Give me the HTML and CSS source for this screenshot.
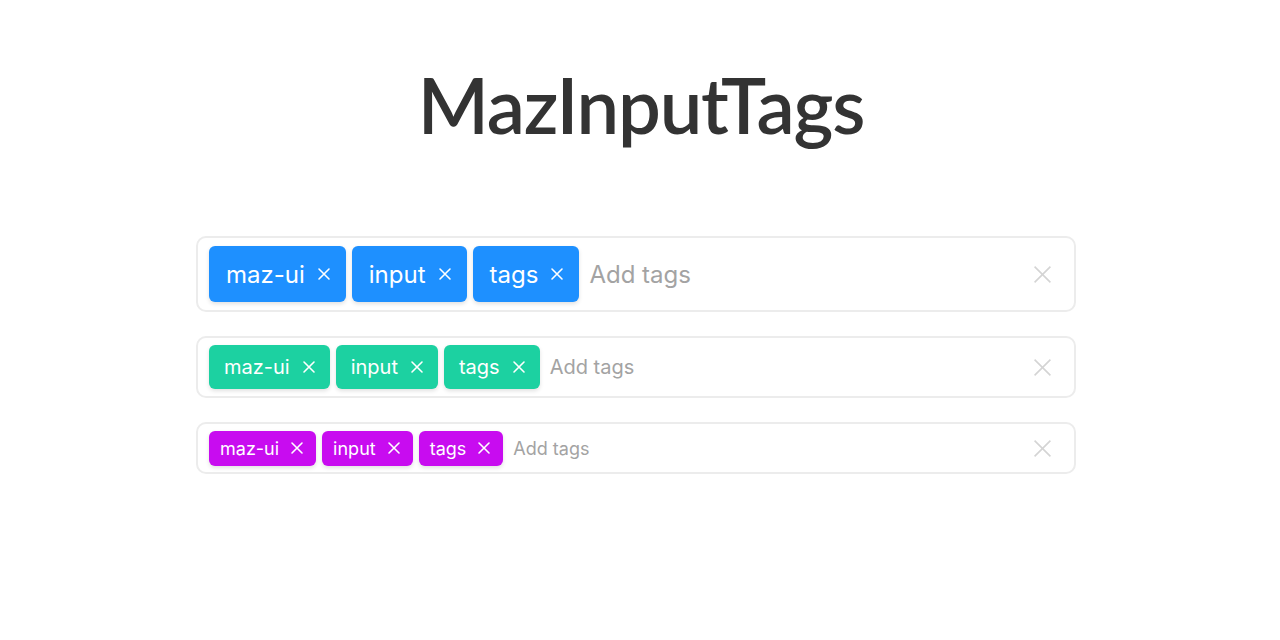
FILE: index.html
```html
<!DOCTYPE html>
<html lang="en">
<head>
<meta charset="utf-8">
<title>MazInputTags</title>
<link rel="stylesheet" href="styles.css">
</head>
<body>
  <h1 class="title">MazInputTags</h1>
  <main class="stack">
    <div class="tags-input size-lg">
      <span class="tag tag-blue">maz-ui<svg class="tag-x" viewBox="0 0 14 14"><path d="M2 2 L12 12 M12 2 L2 12"/></svg></span>
      <span class="tag tag-blue">input<svg class="tag-x" viewBox="0 0 14 14"><path d="M2 2 L12 12 M12 2 L2 12"/></svg></span>
      <span class="tag tag-blue">tags<svg class="tag-x" viewBox="0 0 14 14"><path d="M2 2 L12 12 M12 2 L2 12"/></svg></span>
      <span class="placeholder">Add tags</span>
      <svg class="clear" viewBox="0 0 18 18"><path d="M1.5 1.5 L16.5 16.5 M16.5 1.5 L1.5 16.5"/></svg>
    </div>
    <div class="tags-input size-md">
      <span class="tag tag-green">maz-ui<svg class="tag-x" viewBox="0 0 14 14"><path d="M2 2 L12 12 M12 2 L2 12"/></svg></span>
      <span class="tag tag-green">input<svg class="tag-x" viewBox="0 0 14 14"><path d="M2 2 L12 12 M12 2 L2 12"/></svg></span>
      <span class="tag tag-green">tags<svg class="tag-x" viewBox="0 0 14 14"><path d="M2 2 L12 12 M12 2 L2 12"/></svg></span>
      <span class="placeholder">Add tags</span>
      <svg class="clear" viewBox="0 0 18 18"><path d="M1.5 1.5 L16.5 16.5 M16.5 1.5 L1.5 16.5"/></svg>
    </div>
    <div class="tags-input size-sm">
      <span class="tag tag-purple">maz-ui<svg class="tag-x" viewBox="0 0 14 14"><path d="M2 2 L12 12 M12 2 L2 12"/></svg></span>
      <span class="tag tag-purple">input<svg class="tag-x" viewBox="0 0 14 14"><path d="M2 2 L12 12 M12 2 L2 12"/></svg></span>
      <span class="tag tag-purple">tags<svg class="tag-x" viewBox="0 0 14 14"><path d="M2 2 L12 12 M12 2 L2 12"/></svg></span>
      <span class="placeholder">Add tags</span>
      <svg class="clear" viewBox="0 0 18 18"><path d="M1.5 1.5 L16.5 16.5 M16.5 1.5 L1.5 16.5"/></svg>
    </div>
  </main>
</body>
</html>
```

FILE: styles.css
```css
html, body {
  margin: 0;
  padding: 0;
  background: #ffffff;
}
body {
  font-family: "Inter", "Liberation Sans", sans-serif;
  color: #333;
}
.title {
  margin: 0;
  padding-top: 60px;
  text-align: center;
  font-family: "Lato", "Inter", sans-serif;
  font-weight: 600;
  font-size: 76px;
  letter-spacing: -1.2px;
  line-height: 90px;
  color: #333333;
  padding-left: 2px;
}
.stack {
  display: flex;
  flex-direction: column;
  align-items: center;
  gap: 24px;
  margin-top: 86px;
  padding-right: 8px;
}
.tags-input {
  box-sizing: border-box;
  width: 880px;
  display: flex;
  align-items: center;
  border: 2px solid #ececec;
  border-radius: 10px;
  background: #fff;
  flex: none;
}
.tag {
  display: inline-flex;
  align-items: center;
  color: #fff;
  border-radius: 6px;
  box-shadow: 0 2px 4px rgba(0,0,0,0.12);
  flex: none;
}
.tag-x {
  fill: none;
  stroke: #fff;
  stroke-width: 1.6;
  stroke-linecap: round;
}
.tag-blue { background: #1e90ff; }
.tag-green { background: #1cd1a1; }
.tag-purple { background: #c80cf0; }
.placeholder {
  color: #a3a3a3;
  flex: 1;
}
.clear {
  width: 19px;
  height: 19px;
  fill: none;
  stroke: #d4d4d4;
  stroke-width: 1.5;
  margin-right: 11px;
  flex: none;
}

.size-lg {
  height: 76px;
  padding: 0 11px;
  gap: 6px;
}
.size-lg .tag {
  height: 56px;
  padding: 0 15px 0 17px;
  font-size: 24px;
}
.size-lg .tag-x { width: 14px; height: 14px; margin-left: 12px; }
.size-lg .placeholder { font-size: 24px; margin-left: 4px; }

.size-md {
  height: 62px;
  padding: 0 11px;
  gap: 6px;
}
.size-md .tag {
  height: 44px;
  padding: 0 14px 0 15px;
  font-size: 20px;
}
.size-md .tag-x { width: 14px; height: 14px; margin-left: 12px; }
.size-md .placeholder { font-size: 20px; margin-left: 4px; }

.size-sm {
  height: 52px;
  padding: 0 11px;
  gap: 6px;
}
.size-sm .tag {
  height: 35px;
  padding: 0 12px 0 11px;
  font-size: 18px;
}
.size-sm .tag-x { width: 14px; height: 14px; margin-left: 11px; }
.size-sm .placeholder { font-size: 18px; margin-left: 4px; }
```
